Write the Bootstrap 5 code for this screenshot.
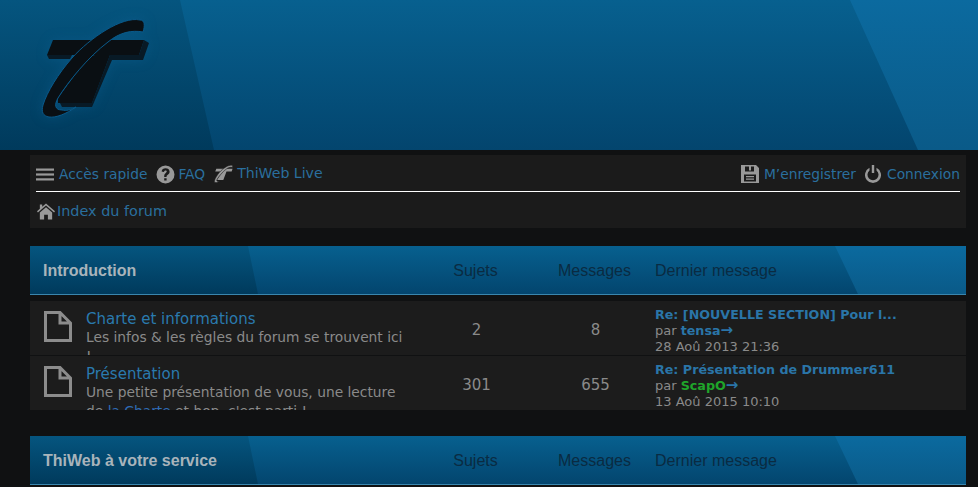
<!DOCTYPE html>
<html lang="fr">
<head>
    <meta charset="UTF-8">
    <meta name="viewport" content="width=device-width, initial-scale=1.0">
    <title>ThiWeb</title>
    <link href="https://cdn.jsdelivr.net/npm/bootstrap@5.3.0/dist/css/bootstrap.min.css" rel="stylesheet">
    <style>
        html, body { overflow: hidden; }
        body {
            background: #101112;
            color: #8a8a8a;
            font-family: "DejaVu Sans", sans-serif;
            font-size: 14px;
        }
        a { color: #2a6f9e; text-decoration: none; }
        .blue-band {
            position: relative;
            overflow: hidden;
            background: linear-gradient(180deg, #07608f 0%, #03456e 100%);
        }
        .blue-band::before, .blue-band::after {
            content: "";
            position: absolute;
            top: 0;
            bottom: 0;
        }
        .blue-band::before {
            left: 0;
            width: var(--left-w);
            background: linear-gradient(180deg, #05557f 0%, #003a5c 100%);
            clip-path: polygon(0 0, var(--left-top) 0, 100% 100%, 0 100%);
        }
        .blue-band::after {
            right: 0;
            width: var(--right-w);
            background: linear-gradient(180deg, #0b6a9f 0%, #0a5a88 100%);
            clip-path: polygon(0 0, 100% 0, 100% 100%, var(--right-bot) 100%);
        }
        .site-head {
            height: 150px;
            --left-w: 214px;
            --left-top: 180px;
            --right-w: 128px;
            --right-bot: 68px;
        }
        .site-logo {
            position: absolute;
            left: 30px;
            top: 10px;
            z-index: 1;
            filter: drop-shadow(0 0 6px rgba(20, 110, 170, .25));
        }
        .page-wrap { margin: 5px 12px 0 30px; }
        .top-panel { background: #1b1b1b; height: 73px; padding: 0 6px 0 6px; }
        .top-nav {
            height: 37px;
            padding-top: 2px;
            border-bottom: 1px solid #fff;
            font-size: 13.8px;
        }
        .live-link { font-size: 14.1px; }
        .crumb-line { height: 36px; font-size: 14.4px; padding-top: 3px; }
        .nav-ico { fill: #999; flex: none; }
        .cat-band {
            height: 49px;
            padding-top: 1px;
            border-bottom: 1px solid #3a86ae;
            font-family: "Liberation Sans", sans-serif;
            font-size: 16px;
            --left-w: 228px;
            --left-top: 218px;
            --right-w: 131px;
            --right-bot: 23px;
        }
        .cat-band > * { position: relative; z-index: 1; }
        .cat-name { width: 386px; flex: none; padding-left: 13px; color: #a9b4bb; font-weight: 700; }
        .col-count { width: 119px; text-align: center; flex: none; }
        .col-last { padding-left: 1px; }
        .cat-band .col-count, .cat-band .col-last { color: #0a2b42; }
        .forum-line {
            background: #1c1c1c;
            height: 54px;
            overflow: hidden;
            margin-bottom: 1px;
        }
        .forum-line .col-count { font-size: 15px; color: #8a8a8a; align-self: center; padding-top: 5px; }
        .forum-main { width: 387px; flex: none; font-size: 13.8px; line-height: 19px; padding: 9px 10px 0 56px; position: relative; }
        .forum-main svg { position: absolute; left: 14px; top: 10px; }
        .forum-title { font-size: 15px; display: block; line-height: 18px; color: #2a7aae; }
        .forum-main .rule-link { color: #2f6bb5; }
        .last-post { font-size: 13px; line-height: 16.2px; padding-top: 6px; }
        .last-post a { color: #2a75a8; }
        .last-post b { font-size: 12.7px; }
        .post-arrow { font-size: 15px; font-weight: 700; line-height: 1; }
        .user-green { color: #1fa52a; font-weight: 700; font-size: 12.7px; }
        .gap-section { margin-top: 26px; }
    </style>
</head>
<body>
    <header class="blue-band site-head">
        <svg class="site-logo" width="125" height="115" viewBox="30 10 125 115">
            <path fill="#081a26" d="M144 40 L149 43 L143 60 H112 L92 107 H62 L60 103 H92 L110 55 H139 Z M47 55 L49 59 H70 L72 55 Z"/>
            <path fill="#0a0f13" d="M53 40 H144 L139 55 H110 L92 103 H58 V98 L88 57 L95 55 H47 Z"/>
            <path fill="#0a0f13" stroke="#0a5a8a" stroke-width="1" d="M140 20 C145 20 145 26 143 32 C132 30 120 32 108 42 C88 57 68 82 58 98 C54 105 55 110 62 110 C66 111 71 110 76 107 C66 114 56 118 49 117 C43 116 41 112 43 105 C47 92 58 74 72 58 C90 38 122 16 140 20 Z"/>
        </svg>
    </header>

    <main class="page-wrap">
        <div class="top-panel">
            <nav class="top-nav d-flex align-items-center">
                <svg class="nav-ico" width="18" height="13" viewBox="0 0 18 13"><rect width="18" height="2.2" y="0.5"/><rect width="18" height="2.200" y="5.400"/><rect width="18" height="2.200" y="10.300"/></svg>
                <a href="#" style="margin-left:5px">Accès rapide</a>
                <svg class="nav-ico" style="margin-left:9px" width="19" height="19" viewBox="0 0 19 19"><path fill-rule="evenodd" d="M9.500.500a9 9 0 1 0 0 18 9 9 0 0 0 0-18ZM8.200 12h2.400v-1c0-.8 3-1.600 3-4.300 0-2.300-1.900-3.400-4-3.400-2.200 0-3.700 1.200-4 3.100l2.400.5c.2-1 .7-1.500 1.500-1.500.8 0 1.300.5 1.300 1.200 0 1.300-2.600 1.800-2.600 4.100Zm0 1.200v2.400h2.400v-2.400Z"/></svg>
                <a href="#" style="margin-left:3px">FAQ</a>
                <svg class="nav-ico" style="margin-left:9px" width="20" height="20" viewBox="40 18 112 102"><path d="M53 40 H144 L139 55 H110 L92 103 H58 V98 L88 57 L95 55 H47 Z"/><path stroke="#1b1b1b" stroke-width="3" d="M140 20 C145 20 145 26 143 32 C132 30 120 32 108 42 C88 57 68 82 58 98 C54 105 55 110 62 110 C66 111 71 110 76 107 C66 114 56 118 49 117 C43 116 41 112 43 105 C47 92 58 74 72 58 C90 38 122 16 140 20 Z"/></svg>
                <a href="#" class="live-link" style="margin-left:3px">ThiWeb Live</a>
                <svg class="nav-ico ms-auto" width="18" height="18" viewBox="0 0 18 18"><path fill-rule="evenodd" d="M0 0H15L18 3V18H0ZM4 1.500V6.500H13V1.500H10V5.500H8V1.500ZM3 9.500V16.500H15V9.500ZM5 11H13V12.300H5ZM5 13.500H13V14.800H5Z"/></svg>
                <a href="#" style="margin-left:5px">M’enregistrer</a>
                <svg class="nav-ico" style="margin-left:9px" width="16" height="18" viewBox="0 0 16 18"><path d="M6.800 0h2.400v8H6.800ZM4.500 2.800v2.600a5.500 5.500 0 1 0 7 0V2.800a8 8 0 1 1-7 0Z"/></svg>
                <a href="#" style="margin-left:6px">Connexion</a>
            </nav>
            <div class="crumb-line d-flex align-items-center">
                <svg class="nav-ico" style="margin-left:1px" width="18" height="17" viewBox="0 0 19 17"><path d="M9.500 0 19 8.300l-1 1.200-8.500-7.300L1 9.500 0 8.300 3 5.700V1h2.500v2.500ZM9.500 4 16 9.500V17h-4.500v-5h-4v5H3V9.500Z"/></svg>
                <a href="#" style="margin-left:2px">Index du forum</a>
            </div>
        </div>

        <section style="margin-top:18px">
            <div class="blue-band cat-band d-flex align-items-center">
                <div class="cat-name">Introduction</div>
                <div class="col-count">Sujets</div>
                <div class="col-count">Messages</div>
                <div class="col-last">Dernier message</div>
            </div>
            <div class="forum-line d-flex" style="margin-top:6px">
                <div class="forum-main">
                    <svg width="28" height="31" viewBox="0 0 28 31"><path fill="none" stroke="#8c8c8c" stroke-width="3" d="M1.500 1.500H16L26.500 12V29.500H1.500ZM16 1.500V12H26.500"/></svg>
                    <a href="#" class="forum-title">Charte et informations</a>
                    Les infos &amp; les règles du forum se trouvent ici !
                </div>
                <div class="col-count">2</div>
                <div class="col-count">8</div>
                <div class="last-post">
                    <a href="#"><b>Re: [NOUVELLE SECTION] Pour l...</b></a><br>
                    par <a href="#"><b>tensa</b><span class="post-arrow">→</span></a><br>
                    28 Aoû 2013 21:36
                </div>
            </div>
            <div class="forum-line d-flex">
                <div class="forum-main">
                    <svg width="28" height="31" viewBox="0 0 28 31"><path fill="none" stroke="#8c8c8c" stroke-width="3" d="M1.500 1.500H16L26.500 12V29.500H1.500ZM16 1.500V12H26.500"/></svg>
                    <a href="#" class="forum-title">Présentation</a>
                    Une petite présentation de vous, une lecture de <a href="#" class="rule-link">la Charte</a> et hop, c'est parti !
                </div>
                <div class="col-count">301</div>
                <div class="col-count">655</div>
                <div class="last-post">
                    <a href="#"><b>Re: Présentation de Drummer611</b></a><br>
                    par <span class="user-green">ScapO</span><a href="#"><span class="post-arrow">→</span></a><br>
                    13 Aoû 2015 10:10
                </div>
            </div>
        </section>

        <section class="gap-section">
            <div class="blue-band cat-band d-flex align-items-center">
                <div class="cat-name">ThiWeb à votre service</div>
                <div class="col-count">Sujets</div>
                <div class="col-count">Messages</div>
                <div class="col-last">Dernier message</div>
            </div>
        </section>
    </main>

    <script src="https://cdn.jsdelivr.net/npm/bootstrap@5.3.0/dist/js/bootstrap.bundle.min.js"></script>
</body>
</html>
